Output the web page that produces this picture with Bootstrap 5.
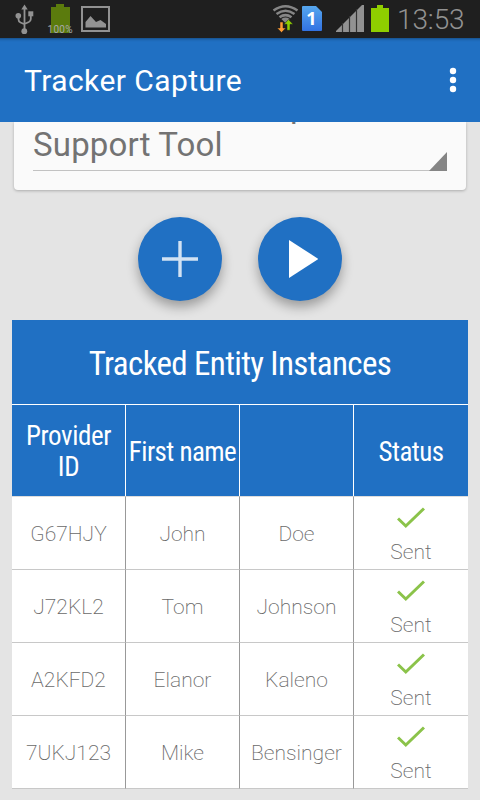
<!DOCTYPE html>
<html lang="en">
<head>
<meta charset="utf-8">
<meta name="viewport" content="width=device-width, initial-scale=1">
<title>Tracker Capture</title>
<link href="https://cdn.jsdelivr.net/npm/bootstrap@5.3.0/dist/css/bootstrap.min.css" rel="stylesheet">
<style>
  :root { --brand: #2070c3; }
  body { width: 480px; height: 800px; overflow: hidden; background: #e4e4e4; font-family: Roboto, sans-serif; }
  svg { display: block; flex: none; }
  .status-bar { height: 38px; background: #1f1f1f; }
  .clock { font-size: 28px; line-height: 38px; color: #929292; font-weight: 300; letter-spacing: -.1px; width: 68px; padding-top: 1px; white-space: nowrap; }
  .app-bar { height: 84px; background: var(--brand); box-shadow: inset 0 4px 3px -3px rgba(0,0,0,.35); padding: 0 23px 0 24px; }
  .app-title { font-size: 30px; line-height: 36px; white-space: nowrap; letter-spacing: .43px; padding-top: 2px; }
  .page-body { height: 678px; }
  .program-card { height: 68px; margin: 0 14px; background: #fafafa; border-radius: 0 0 4px 4px; box-shadow: 0 1px 3px rgba(0,0,0,.25); padding: 0 19px; }
  .spinner-line { display: flow-root; height: 49px; border-bottom: 1px solid #c2c2c2; color: #737373; font-size: 33px; line-height: 38px; letter-spacing: .17px; }
  .spinner-line .first-line { margin-top: -35px; padding-left: 257px; }
  .spinner-line .second-line { padding-top: 1px; }
  .caret-corner { right: 0; bottom: -1px; }
  .actions { height: 130px; padding-top: 27px; gap: 36px; }
  .fab { width: 84px; height: 84px; background: var(--brand); box-shadow: 0 6px 12px rgba(0,0,0,.32); }
  .entity-table { margin: 0 12px; }
  .table-title { height: 84px; background: var(--brand); font-size: 33px; letter-spacing: -.64px; padding-top: 4px; }
  .condensed { font-family: "Roboto Condensed", Roboto, sans-serif; font-stretch: condensed; }
  .entity-grid { display: grid; grid-template-columns: 114px 114px 114px 114px; }
  .head-cell { height: 91px; margin-top: 1px; background: var(--brand); font-size: 27px; line-height: 31px; letter-spacing: -.55px; padding-top: 3px; white-space: nowrap; }
  .head-cell:first-child { letter-spacing: -.4px; padding-top: 2px; }
  .head-cell:not(:last-child) { border-right: 1px solid #fff; }
  .body-cell { height: 73px; border-bottom: 1px solid #c8c8c8; border-right: 1px solid #999; color: #6a6a6a; font-size: 21px; line-height: 25px; font-weight: 200; padding-top: 3px; }
  .body-cell.state { border-right: 0; padding-top: 5px; }
  .check-icon { margin-bottom: 11px; }
  .first-row .body-cell { border-top: 1px solid #ddd; height: 74px; }
</style>
</head>
<body>
<header class="status-bar d-flex">
  <svg width="397" height="38" viewBox="0 0 397 38">
    <g stroke="#929292" stroke-width="1.8" fill="none"><path d="M24.500 8v22M18.500 16v3.500q0 2 2 3l4 1.800M30.800 14v5q0 2-2 3l-4.300 2"/></g>
    <g fill="#929292"><path d="M21.300 9.500 24.500 4.500 27.700 9.500z"/><circle cx="18.300" cy="15.700" r="2.800"/><path d="M28.300 11.300h5v5h-5z"/><circle cx="24.300" cy="31.200" r="2.900"/></g>
    <path d="M56 4h8v3h6v26H51V7h5z" fill="#5b7b0d"/>
    <text x="47.500" y="32.500" font-size="10" font-family="Roboto" fill="#a8a8a8" textLength="25">100%</text>
    <path d="M82 7h27v24H82z" fill="none" stroke="#929292" stroke-width="2"/>
    <path d="M85.500 27.500v-5.500l5-6 5.500 6 4.500-2 5.500 4v3.500z" fill="#929292"/>
    <g fill="none" stroke="#868686" stroke-width="2.500"><path d="M273.500 10.500Q285.500 2 297.500 10.500M276.500 14Q285.500 7.500 294.500 14M279.500 17.300Q285.500 13 291.500 17.300"/></g>
    <path d="M281.300 19q4.200-2.800 8.400 0l-4.200 4z" fill="#868686"/>
    <path d="M280 22h3v6h2.800l-4.300 4.500-4.300-4.500h2.800z" fill="#ff9c33" stroke="#1f1f1f" stroke-width=".5"/>
    <path d="M287 30.300v-6h-3l4.500-4.800 4.500 4.800h-3v6z" fill="#8fcf00" stroke="#1f1f1f" stroke-width=".5"/>
    <linearGradient id="sim" x1="0" y1="0" x2="0" y2="1"><stop stop-color="#56a7ee"/><stop offset="1" stop-color="#3272e2"/></linearGradient>
    <path d="M303 6h13l6 6v18q0 1-1 1h-18q-1 0-1-1V7q0-1 1-1z" fill="url(#sim)"/>
    <text x="311.500" y="25" text-anchor="middle" font-family="Open Sans" font-weight="700" font-size="18" fill="#fff">1</text>
    <path d="M336 32v-1L362 5h2v27z" fill="#929292"/>
    <path d="M342.500 23v9M349.500 16v16M356.500 9v23" stroke="#333" stroke-width="1.200"/>
    <path d="M377 5h6v3h6v24h-18V8h6z" fill="#8fce00"/>
  </svg>
  <div class="clock">13:53</div>
</header>
<nav class="app-bar d-flex align-items-center justify-content-between text-white">
  <div class="app-title">Tracker Capture</div>
  <svg width="8" height="26" viewBox="0 0 8 26" fill="#fff"><circle cx="4" cy="4" r="3.200"/><circle cx="4" cy="13" r="3.200"/><circle cx="4" cy="22" r="3.200"/></svg>
</nav>
<main class="page-body overflow-hidden">
  <section class="program-card">
    <div class="spinner-line position-relative">
      <div class="first-line">p</div>
      <div class="second-line">Support Tool</div>
      <svg class="caret-corner position-absolute" width="18" height="19" viewBox="0 0 18 19"><path d="M18 0v19H0z" fill="#858585"/></svg>
    </div>
  </section>
  <div class="actions d-flex justify-content-center">
    <button class="fab btn rounded-circle border-0 p-0 d-flex align-items-center justify-content-center" aria-label="Add"><svg width="36" height="36" viewBox="0 0 36 36"><path d="M18 0v36M0 18h36" stroke="#d2e2f3" stroke-width="3.400"/></svg></button>
    <button class="fab btn rounded-circle border-0 p-0 d-flex align-items-center justify-content-center" aria-label="Run"><svg width="36" height="38" viewBox="0 0 36 38"><path d="M7 0l29.500 19L7 38z" fill="#fff"/></svg></button>
  </div>
  <section class="entity-table bg-white text-center">
    <div class="table-title condensed text-white d-flex align-items-center justify-content-center"><span>Tracked Entity Instances</span></div>
    <div class="entity-grid condensed text-white">
      <div class="head-cell d-flex align-items-center justify-content-center"><span>Provider<br>ID</span></div>
      <div class="head-cell d-flex align-items-center justify-content-center"><span>First name</span></div>
      <div class="head-cell"></div>
      <div class="head-cell d-flex align-items-center justify-content-center"><span>Status</span></div>
    </div>
    <div id="rows"></div>
  </section>
</main>
<script>
  const people = [["G67HJY","John","Doe"],["J72KL2","Tom","Johnson"],["A2KFD2","Elanor","Kaleno"],["7UKJ123","Mike","Bensinger"]];
  document.getElementById("rows").innerHTML = people.map((p, i) =>
    `<div class="entity-grid${i ? "" : " first-row"}">` +
    p.map(t => `<div class="body-cell d-flex align-items-center justify-content-center"><span>${t}</span></div>`).join("") +
    `<div class="body-cell state d-flex flex-column align-items-center justify-content-center"><svg class="check-icon" width="28" height="22" viewBox="0 0 28 22"><path d="M1 11.500l7.800 7.500L27 1.500" fill="none" stroke="#8bc34a" stroke-width="3"/></svg><span>Sent</span></div></div>`).join("");
</script>
<script src="https://cdn.jsdelivr.net/npm/bootstrap@5.3.0/dist/js/bootstrap.bundle.min.js"></script>
</body>
</html>
